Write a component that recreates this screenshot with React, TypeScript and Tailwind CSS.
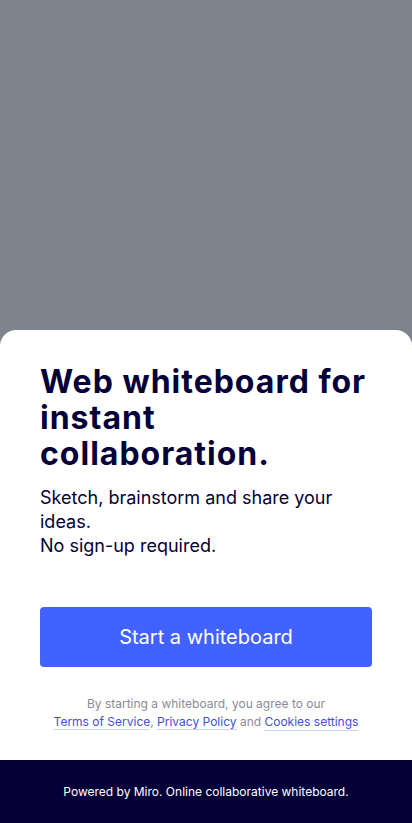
import React from 'react';

const font = { fontFamily: 'Inter, "Noto Sans", sans-serif' };

/**
 * Landing sheet for the web whiteboard, shown over a dimmed backdrop.
 */
const App: React.FC = () => {
  return (
    <div className="flex min-h-[823px] flex-col bg-[#7e848e]" style={font}>
      <div className="flex-1" />
      <div className="rounded-t-2xl bg-white px-10 pt-[34px] pb-[29px] text-[#050038]">
        <h1 className="text-[32px] leading-[36px] font-bold tracking-[1px]">
          Web whiteboard for instant collaboration.
        </h1>
        <p className="mt-[14px] text-[18px] leading-[24px]">
          Sketch, brainstorm and share your ideas.
          <br />
          No sign-up required.
        </p>
        <button className="mt-[49px] flex h-[60px] w-full items-center justify-center rounded bg-[#4262ff] text-[20px] text-white">
          Start a whiteboard
        </button>
        <p className="mt-[28px] text-center text-[12px] leading-[18px] text-[#8b8b96]">
          By starting a whiteboard, you agree to our
          <br />
          <a className="border-b border-[#c9d0f5] text-[#3f4fd6]">Terms of Service</a>,{' '}
          <a className="border-b border-[#c9d0f5] text-[#3f4fd6]">Privacy Policy</a> and{' '}
          <a className="border-b border-[#c9d0f5] pb-[1px] text-[#3f4fd6]">Cookies settings</a>
        </p>
      </div>
      <footer className="flex h-[63px] items-center justify-center bg-[#050038] text-[12px] text-white">
        Powered by Miro. Online collaborative whiteboard.
      </footer>
    </div>
  );
};

export default App;
